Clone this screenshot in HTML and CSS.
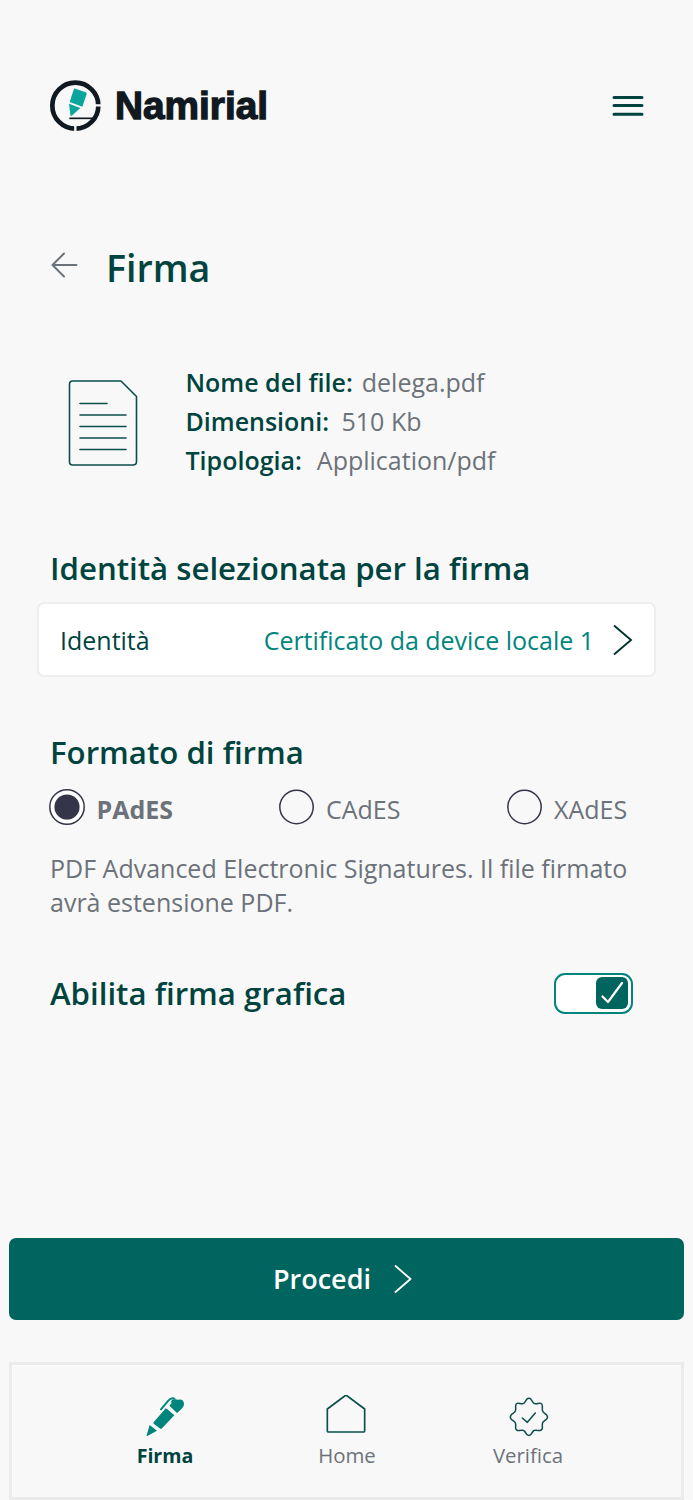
FILE: index.html
```html
<!DOCTYPE html>
<html lang="it">
<head>
<meta charset="utf-8">
<title>Namirial - Firma</title>
<link rel="stylesheet" href="styles.css">
</head>
<body>
<div class="screen">
  <header class="topbar">
    <div class="brand">
      <svg class="brand-mark" viewBox="27 27 159 159" fill="none">
        <circle cx="106" cy="107" r="69" stroke="#101820" stroke-width="14"/>
        <path d="M160 106h26M106 160v26" stroke="#f8f8f8" stroke-width="7"/>
        <path d="M88 145h74" stroke="#101820" stroke-width="5"/>
        <path d="M106 56l31 11q4 2 3 5l-13 38-38-14 12-37q1-4 5-3zM87 101l34 13-24 22q-5 4-6-2z" fill="#0aa59c"/>
      </svg>
      <span class="brand-name">Namirial</span>
    </div>
    <svg class="menu" viewBox="0 0 32 22" fill="none" stroke="#00443f" stroke-width="3" stroke-linecap="round"><path d="M2 2.500h28M2 10.500h28M2 19.200h28"/></svg>
  </header>

  <div class="title-row">
    <svg class="back" viewBox="0 0 28 26" fill="none" stroke="#6c727a" stroke-width="2" stroke-linecap="round" stroke-linejoin="round"><path d="M26.500 13H2.500M14 1.500L2.500 13 14 24.500"/></svg>
    <h1 class="title">Firma</h1>
  </div>

  <section class="file">
    <svg class="file-icon" viewBox="0 0 70 87" fill="none" stroke="#0a4f4a" stroke-width="1.600" stroke-linecap="round" stroke-linejoin="round"><path d="M4.500 2H53L68.500 17.500v65q0 3.500-3.500 3.500H4.500Q1.500 86 1.500 82.500V5.500Q1.500 2 4.500 2zM12 24.500h27M12 36h46M12 47.500h46M12 59h46M12 70.500h46"/></svg>
    <div class="file-info">
      <div class="file-line"><b class="key k1">Nome del file:</b><span class="v1">delega.pdf</span></div>
      <div class="file-line"><b class="key k2">Dimensioni:</b><span class="v2">510 Kb</span></div>
      <div class="file-line"><b class="key k3">Tipologia:</b><span class="v3">Application/pdf</span></div>
    </div>
  </section>

  <h2 class="heading heading-identity">Identità selezionata per la firma</h2>
  <div class="card">
    <span class="card-label">Identità</span>
    <span class="card-value">Certificato da device locale 1</span>
    <svg class="card-arrow" viewBox="0 0 20 32" fill="none" stroke="#00332f" stroke-width="1.900"><path d="M1 1.500L18 16 1 30.500"/></svg>
  </div>

  <h2 class="heading heading-format">Formato di firma</h2>
  <div class="radios">
    <div class="radio selected"><svg class="dot" viewBox="0 0 36 36" fill="none" stroke="#35354a" stroke-width="1.500"><circle cx="18" cy="18" r="17.200" fill="#fff"/><circle cx="18" cy="18" r="12.600" fill="#35354a" stroke="none"/></svg><span>PAdES</span></div>
    <div class="radio"><svg class="dot" viewBox="0 0 36 36" fill="none" stroke="#35354a" stroke-width="1.500"><circle cx="17.500" cy="18" r="16.700"/></svg><span>CAdES</span></div>
    <div class="radio"><svg class="dot" viewBox="0 0 36 36" fill="none" stroke="#35354a" stroke-width="1.500"><circle cx="17.500" cy="18" r="16.700"/></svg><span>XAdES</span></div>
  </div>
  <p class="note">PDF Advanced Electronic Signatures. Il file firmato<br>avrà estensione PDF.</p>

  <div class="graphic">
    <h2 class="heading heading-graphic">Abilita firma grafica</h2>
    <div class="switch"><div class="knob"><svg class="tick" viewBox="0 0 32 32" fill="none" stroke="#fff" stroke-width="2.200" stroke-linecap="round" stroke-linejoin="round"><path d="M6.500 19.500l5.500 5.500L26 6"/></svg></div></div>
  </div>

  <button class="proceed"><span>Procedi</span><svg class="proceed-arrow" viewBox="0 0 18 28" fill="none" stroke="#fff" stroke-width="1.800" stroke-linecap="round" stroke-linejoin="round"><path d="M1.500 1L16.500 14 1.500 27"/></svg></button>

  <nav class="tabs">
    <div class="tab active">
      <svg class="tab-icon" viewBox="43 30 120 126" fill="#00857d">
        <path d="M57 120l22 17-29 16q-3 1-2-3zM69 116Q67 113 70 110L106 69 131 91 94 130Q91 133 87 130z"/>
        <path d="M114 60L121 50Q123 43 130 43 136 42 142 44 160 41 160 58 160 68 139 84z"/>
        <path d="M91 73l22-26q9-10 18-6" fill="none" stroke="#00857d" stroke-width="6" stroke-linecap="round"/>
        <path d="M107 70l15-18" stroke="#f8f8f8" stroke-width="4"/>
      </svg>
      <span>Firma</span>
    </div>
    <div class="tab home">
      <svg class="tab-icon" viewBox="47 30 120 126" fill="none" stroke="#0a4f4a" stroke-width="5" stroke-linejoin="round"><path d="M107 30L163 72v65q0 4-4 4H55q-4 0-4-4V72z"/></svg>
      <span>Home</span>
    </div>
    <div class="tab verify">
      <svg class="tab-icon" viewBox="72 30 120 126" fill="none" stroke="#0a4f4a" stroke-width="4.500" stroke-linejoin="round" stroke-linecap="round"><path d="M125 43Q132 37 138 43C145 55 147 58 155 56Q172 51 172 63V75C172 82 176 83 184 89Q191 96 184 103C176 109 172 110 172 117V129Q172 139 155 136C147 134 145 137 138 148Q132 155 125 148C118 137 116 134 108 136Q92 139 92 129V117C92 110 88 109 79 103Q73 96 79 89C88 83 92 82 92 75V63Q92 51 108 56C116 58 118 55 125 43zM112 99l15 13 24-28"/></svg>
      <span>Verifica</span>
    </div>
  </nav>
</div>
</body>
</html>
```

FILE: styles.css
```css
* { box-sizing: border-box; }
body { margin: 0; background: #f8f8f8; color: #6c727a; font: 25px/34px "Open Sans", sans-serif; }
svg { display: block; flex: none; }
.screen { height: 1500px; display: flex; flex-direction: column; overflow: hidden; white-space: nowrap; }
h1, h2, p { margin: 0; }

.topbar { display: flex; justify-content: space-between; align-items: flex-start; padding: 79px 49px 0; height: 241px; }
.brand { display: flex; align-items: flex-start; }
.brand-mark { width: 53px; height: 53px; }
.brand-name { margin-left: 13px; font: bold 38.800px/54px "Liberation Sans", sans-serif; color: #101820; -webkit-text-stroke: 1.300px #101820; }
.menu { width: 32px; height: 22px; margin-top: 16px; }

.title-row { display: flex; align-items: center; padding-left: 50px; height: 52px; }
.back { width: 28px; height: 26px; margin-bottom: 5px; }
.title { margin: 2px 0 0 28px; font-size: 37.600px; line-height: 52px; font-weight: 600; color: #00443f; }

.file { display: flex; margin-top: 70px; padding-left: 68px; }
.file-icon { width: 70px; height: 87px; margin-top: 16px; }
.file-info { margin-left: 47.500px; }
.file-line { display: flex; line-height: 39px; }
.key { font-weight: 600; color: #00443f; }
.v1 { margin-left: 9px; }
.v2 { margin-left: 12.500px; }
.v3 { margin-left: 15px; }

.heading { padding-left: 50px; font-size: 31.200px; line-height: 44px; font-weight: 600; color: #00443f; }
.heading-identity { margin-top: 66px; }
.card { display: flex; align-items: center; height: 75px; margin: 12px 37px 0 37px; padding: 0 21px; border: 2px solid #eee; border-radius: 7px; background: #fff; }
.card-label { color: #00443f; }
.card-value { margin-left: auto; color: #00857d; letter-spacing: -0.020px; }
.card-arrow { width: 20px; height: 32px; margin-left: 19px; }

.heading-format { margin-top: 53px; }
.radios { display: grid; grid-template-columns: 230px 228px auto; margin-top: 14px; padding-left: 49px; }
.radio { display: flex; align-items: center; height: 38px; }
.radio span { margin: 3px 0 0 11px; }
.dot { width: 36px; height: 36px; }
.selected { font-weight: 700; }
.selected span { margin-left: 11.500px; }
.note { margin-top: 25px; padding-left: 50px; }

.graphic { display: flex; align-items: center; justify-content: space-between; margin-top: 53px; padding-right: 60px; height: 42px; }
.switch { display: flex; justify-content: flex-end; align-items: center; width: 79px; height: 41px; padding-right: 3px; border: 2px solid #00857d; border-radius: 11px; background: #fff; }
.knob { width: 32px; height: 32px; border-radius: 6px; background: #00655e; }
.tick { width: 32px; height: 32px; }

.proceed { display: flex; align-items: center; justify-content: center; height: 82px; margin: 224px 9px 0; padding: 0 8px 0 0; border: 0; border-radius: 7px; background: #00655e; color: #fff; font: 600 27px/36px "Open Sans", sans-serif; }
.proceed-arrow { width: 18px; height: 28px; margin-left: 23px; }

.tabs { display: flex; height: 138px; margin: 42px 9px 0; border: 3px solid #ebebeb; font-size: 20.400px; line-height: 28px; }
.tab { display: flex; flex-direction: column; align-items: center; width: 80px; padding-top: 30px; }
.tab:first-child { margin-left: 113px; }
.home { margin-left: 102px; }
.verify { margin-left: 101px; }
.tab-icon { width: 40px; height: 42px; margin-bottom: 4px; }
.home .tab-icon { margin-right: 3px; }
.verify .tab-icon { margin-left: 2px; }
.active { font-size: 19.600px; font-weight: 700; color: #00443f; }
.active .tab-icon { margin-bottom: 5px; }
```
